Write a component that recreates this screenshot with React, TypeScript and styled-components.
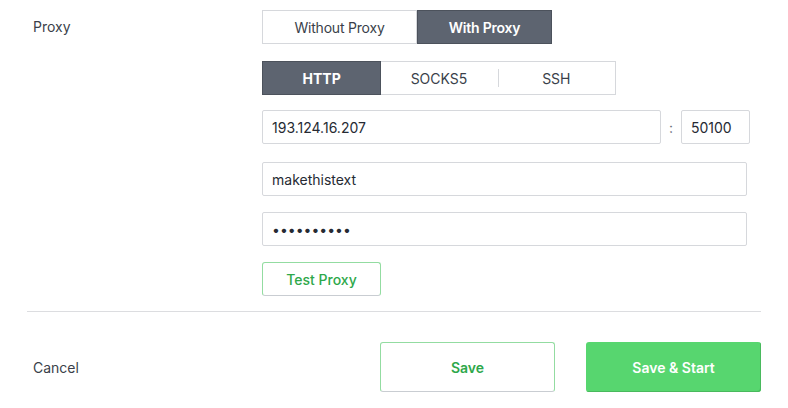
import React, { useState } from "react";
import styled, { createGlobalStyle } from "styled-components";

const GlobalStyle = createGlobalStyle`
  * { box-sizing: border-box; }
  body {
    margin: 0;
    background: #ffffff;
    font-family: Inter, "Noto Sans", "Liberation Sans", sans-serif;
    color: #3a3f4a;
  }
`;

const App = () => {
  const [mode, setMode] = useState<"without" | "with">("with");
  const [protocol, setProtocol] = useState("HTTP");
  const [host, setHost] = useState("193.124.16.207");
  const [port, setPort] = useState("50100");
  const [user, setUser] = useState("makethistext");
  const [pass, setPass] = useState("0123456789");

  const protocols = ["HTTP", "SOCKS5", "SSH"];

  return (
    <>
      <GlobalStyle />
      <Page>
        <FormGrid>
          <Label>Proxy</Label>
          <Controls>
            <Segmented>
              <ToggleButton
                $active={mode === "without"}
                $width={155}
                onClick={() => setMode("without")}
              >
                Without Proxy
              </ToggleButton>
              <ToggleButton
                $active={mode === "with"}
                $width={135}
                onClick={() => setMode("with")}
              >
                With Proxy
              </ToggleButton>
            </Segmented>

            <Tabs>
              {protocols.map((p, i) => (
                <Tab
                  key={p}
                  $active={protocol === p}
                  $divider={
                    i > 0 && protocol !== p && protocol !== protocols[i - 1]
                  }
                  onClick={() => setProtocol(p)}
                >
                  {p}
                </Tab>
              ))}
            </Tabs>

            <HostRow>
              <TextInput
                $width={399}
                value={host}
                onChange={(e) => setHost(e.target.value)}
              />
              <Colon>:</Colon>
              <TextInput
                $width={69}
                value={port}
                onChange={(e) => setPort(e.target.value)}
              />
            </HostRow>

            <TextInput
              $width={485}
              value={user}
              onChange={(e) => setUser(e.target.value)}
            />
            <PasswordInput
              $width={485}
              type="password"
              value={pass}
              onChange={(e) => setPass(e.target.value)}
            />

            <TestButton>Test Proxy</TestButton>
          </Controls>
        </FormGrid>

        <Divider />

        <Footer>
          <CancelLink>Cancel</CancelLink>
          <FooterButtons>
            <OutlineButton>Save</OutlineButton>
            <PrimaryButton>Save &amp; Start</PrimaryButton>
          </FooterButtons>
        </Footer>
      </Page>
    </>
  );
};

export default App;

const Page = styled.div`
  width: 788px;
  height: 408px;
  padding: 10px 27px 0 27px;
`;

const FormGrid = styled.div`
  display: grid;
  grid-template-columns: 235px 1fr;
`;

const Label = styled.div`
  font-size: 14px;
  line-height: 34px;
  padding-left: 6px;
  color: #3a3f4a;
`;

const Controls = styled.div`
  display: flex;
  flex-direction: column;
  align-items: flex-start;
`;

const Segmented = styled.div`
  display: flex;
  height: 34px;
  margin-bottom: 17px;
`;

const ToggleButton = styled.button<{ $active: boolean; $width: number }>`
  width: ${(p) => p.$width}px;
  height: 34px;
  font-family: inherit;
  font-size: 14px;
  font-weight: ${(p) => (p.$active ? 600 : 400)};
  letter-spacing: -0.2px;
  color: ${(p) => (p.$active ? "#ffffff" : "#3a3f4a")};
  background: ${(p) => (p.$active ? "#5d6470" : "#ffffff")};
  border: 1px solid ${(p) => (p.$active ? "#4c525c" : "#d6d8dc")};
  padding: 0;
  cursor: pointer;
`;

const Tabs = styled.div`
  display: flex;
  width: 354px;
  height: 34px;
  border: 1px solid #d6d8dc;
  margin-bottom: 15px;
`;

const Tab = styled.button<{ $active: boolean; $divider: boolean }>`
  position: relative;
  z-index: ${(p) => (p.$active ? 1 : 0)};
  flex: 1;
  height: 32px;
  font-family: inherit;
  font-size: 14px;
  font-weight: ${(p) => (p.$active ? 700 : 400)};
  color: ${(p) => (p.$active ? "#ffffff" : "#3a3f4a")};
  background: ${(p) => (p.$active ? "#5d6470" : "#ffffff")};
  box-shadow: ${(p) => (p.$active ? "0 0 0 1px #4c525c" : "none")};
  border: none;
  padding: 0;
  cursor: pointer;

  &::before {
    content: "";
    display: ${(p) => (p.$divider ? "block" : "none")};
    position: absolute;
    left: 0;
    top: 7px;
    bottom: 7px;
    width: 1px;
    background: #d6d8dc;
  }
`;

const HostRow = styled.div`
  display: flex;
  align-items: center;
  margin-bottom: 18px;
`;

const Colon = styled.span`
  width: 20px;
  text-align: center;
  font-size: 14px;
  color: #6b707a;
`;

const TextInput = styled.input<{ $width: number }>`
  width: ${(p) => p.$width}px;
  height: 34px;
  padding: 0 9px;
  font-family: inherit;
  font-size: 14px;
  color: #262a33;
  background: #ffffff;
  border: 1px solid #d6d8dc;
  border-radius: 2px;
  outline: none;
  margin-bottom: 16px;

  ${HostRow} & {
    margin-bottom: 0;
  }
`;

const PasswordInput = styled(TextInput)`
  font-size: 14px;
  letter-spacing: 0;
`;

const TestButton = styled.button`
  width: 119px;
  height: 34px;
  font-family: inherit;
  font-size: 14px;
  font-weight: 500;
  color: #2ea84a;
  background: #ffffff;
  border: 1px solid #93dca1;
  border-bottom-color: #c9cdd2;
  border-radius: 3px;
  cursor: pointer;
`;

const Divider = styled.div`
  height: 1px;
  background: #dcdde0;
  margin-top: 15px;
`;

const Footer = styled.div`
  display: flex;
  align-items: center;
  justify-content: space-between;
  padding-top: 30px;
`;

const CancelLink = styled.span`
  padding-left: 6px;
  font-size: 14px;
  color: #3a3f4a;
  cursor: pointer;
`;

const FooterButtons = styled.div`
  display: flex;
  gap: 31px;
`;

const OutlineButton = styled.button`
  width: 175px;
  height: 50px;
  font-family: inherit;
  font-size: 14px;
  font-weight: 600;
  color: #2ea84a;
  background: #ffffff;
  border: 1px solid #93dca1;
  border-bottom-color: #c9cdd2;
  border-radius: 3px;
  cursor: pointer;
`;

const PrimaryButton = styled.button`
  width: 175px;
  height: 50px;
  font-family: inherit;
  font-size: 14px;
  font-weight: 600;
  color: #ffffff;
  background: #57d66f;
  border: none;
  border-radius: 3px;
  box-shadow: inset -1px -1px 0 #49b95d;
  cursor: pointer;
`;
